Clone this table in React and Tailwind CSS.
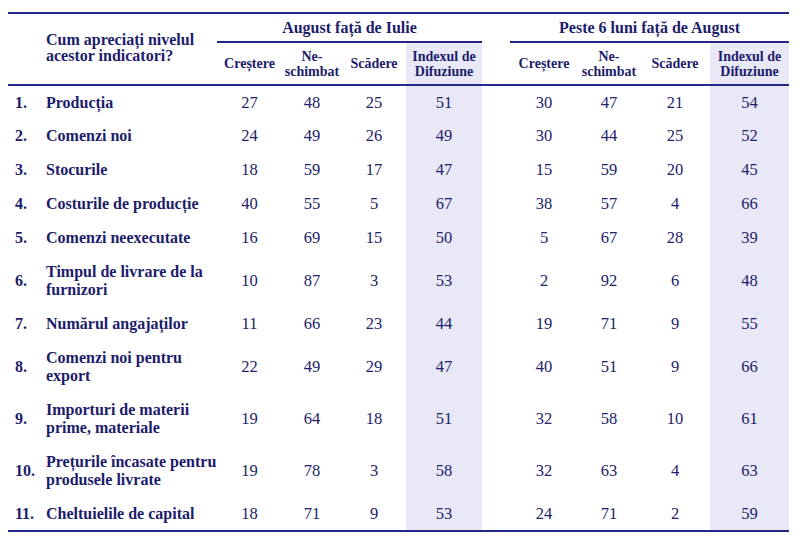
import React from "react";

const rows = [
  ["1.", ["Producția"], [27, 48, 25, 51], [30, 47, 21, 54]],
  ["2.", ["Comenzi noi"], [24, 49, 26, 49], [30, 44, 25, 52]],
  ["3.", ["Stocurile"], [18, 59, 17, 47], [15, 59, 20, 45]],
  ["4.", ["Costurile de producție"], [40, 55, 5, 67], [38, 57, 4, 66]],
  ["5.", ["Comenzi neexecutate"], [16, 69, 15, 50], [5, 67, 28, 39]],
  ["6.", ["Timpul de livrare de la", "furnizori"], [10, 87, 3, 53], [2, 92, 6, 48]],
  ["7.", ["Numărul angajaților"], [11, 66, 23, 44], [19, 71, 9, 55]],
  ["8.", ["Comenzi noi pentru", "export"], [22, 49, 29, 47], [40, 51, 9, 66]],
  ["9.", ["Importuri de materii", "prime, materiale"], [19, 64, 18, 51], [32, 58, 10, 61]],
  ["10.", ["Prețurile încasate pentru", "produsele livrate"], [19, 78, 3, 58], [32, 63, 4, 63]],
  ["11.", ["Cheltuielile de capital"], [18, 71, 9, 53], [24, 71, 2, 59]],
];

function Sub({ a, b, shade }) {
  return (
    <th
      className={`align-middle text-center font-bold text-[14px] leading-[15px] text-[#1c1c6b] whitespace-nowrap ${
        shade ? "bg-[#e8e8f6]" : ""
      }`}
    >
      {b ? (
        <>
          {a}
          <br />
          {b}
        </>
      ) : (
        a
      )}
    </th>
  );
}

function Num({ v, shade }) {
  return (
    <td
      className={`text-center text-[16.5px] leading-[18px] align-middle text-[#22226a] ${
        shade ? "bg-[#e8e8f6]" : ""
      }`}
    >
      {v}
    </td>
  );
}

export default function App() {
  return (
    <div className="w-[800px] h-[542px] bg-white pt-[12px] pl-[8px] font-['Liberation_Serif','Times_New_Roman',serif]">
      <table className="table-fixed border-collapse w-[781px] text-[#1c1c6b]">
        <colgroup>
          <col className="w-[38px]" />
          <col className="w-[171px]" />
          <col className="w-[65px]" />
          <col className="w-[60px]" />
          <col className="w-[64px]" />
          <col className="w-[76px]" />
          <col className="w-[28px]" />
          <col className="w-[68px]" />
          <col className="w-[62px]" />
          <col className="w-[70px]" />
          <col className="w-[79px]" />
        </colgroup>
        <thead>
          <tr className="h-[29px] border-t-2 border-[#26268a]">
            <th
              colSpan={2}
              rowSpan={2}
              className="text-left align-middle pl-[38px] pb-[2px] font-bold text-[16px] leading-[16px] whitespace-nowrap"
            >
              Cum apreciați nivelul
              <br />
              acestor indicatori?
            </th>
            <th
              colSpan={4}
              className="text-center font-bold text-[16px] leading-[16px] border-b-2 border-[#26268a] align-middle"
            >
              August față de Iulie
            </th>
            <th />
            <th
              colSpan={4}
              className="text-center font-bold text-[16px] leading-[16px] border-b-2 border-[#26268a] align-middle"
            >
              Peste 6 luni față de August
            </th>
          </tr>
          <tr className="h-[43px] border-b-2 border-[#26268a]">
            <Sub a="Creștere" />
            <Sub a="Ne-" b="schimbat" />
            <Sub a="Scădere" />
            <Sub a="Indexul de" b="Difuziune" shade />
            <th />
            <Sub a="Creștere" />
            <Sub a="Ne-" b="schimbat" />
            <Sub a="Scădere" />
            <Sub a="Indexul de" b="Difuziune" shade />
          </tr>
        </thead>
        <tbody>
          {rows.map(([n, label, g1, g2], i) => (
            <tr
              key={n}
              className={`${label.length > 1 ? "h-[52px]" : "h-[34px]"} ${
                i === rows.length - 1 ? "border-b-2 border-[#26268a]" : ""
              }`}
            >
              <td className="pl-[7px] font-bold text-[16px] leading-[18px] align-middle">{n}</td>
              <td className="font-bold text-[16px] leading-[18px] align-middle whitespace-nowrap">
                {label.map((l, k) => (
                  <div key={k}>{l}</div>
                ))}
              </td>
              {g1.map((v, k) => (
                <Num key={k} v={v} shade={k === 3} />
              ))}
              <td />
              {g2.map((v, k) => (
                <Num key={k} v={v} shade={k === 3} />
              ))}
            </tr>
          ))}
        </tbody>
      </table>
    </div>
  );
}
